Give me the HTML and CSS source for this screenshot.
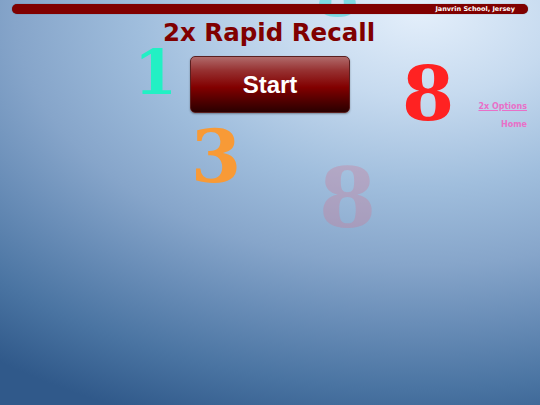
FILE: index.html
```html
<!DOCTYPE html>
<html>
<head>
<meta charset="utf-8">
<link rel="stylesheet" href="styles.css">
</head>
<body>
<div class="stage">
  <div class="num n-top">8</div>
  <div class="num n-one">1</div>
  <div class="num n-three">3</div>
  <div class="num n-red">8</div>
  <div class="num n-faded">8</div>
  <header class="topbar"><span class="school">Janvrin School, Jersey</span></header>
  <h1 class="title">2x Rapid Recall</h1>
  <div class="row">
    <div class="side-left"></div>
    <button class="start">Start</button>
    <nav class="links">
      <a class="link under" href="#">2x Options</a>
      <a class="link" href="#">Home</a>
    </nav>
  </div>
</div>
</body>
</html>
```
FILE: styles.css
```css
html, body {
  margin: 0;
  padding: 0;
  width: 540px;
  height: 405px;
  overflow: hidden;
}
.stage {
  position: relative;
  width: 540px;
  height: 405px;
  padding-top: 4px;
  box-sizing: border-box;
  background: radial-gradient(ellipse 700px 440px at 420px 10px, #e4effb 0%, #c6daef 20%, #a0bedd 40%, #86a5ca 58%, #6a8eb8 71%, #4a74a2 86%, #30598a 100%);
  font-family: "DejaVu Sans", Verdana, sans-serif;
}
.topbar {
  position: relative;
  z-index: 2;
  margin: 0 12px;
  height: 10px;
  background: #800000;
  border-radius: 6px;
  display: flex;
  align-items: center;
  justify-content: flex-end;
  padding: 0 13px;
  box-shadow: 0 0 1px rgba(0,0,0,0.5);
}
.school {
  color: #fff;
  font-size: 6.5px;
  font-weight: bold;
  line-height: 10px;
}
.title {
  position: relative;
  z-index: 2;
  margin: 5px 0 0 0;
  text-align: center;
  color: #800000;
  font-size: 24.5px;
  font-weight: bold;
  line-height: 28px;
  padding-right: 2px;
}
.row {
  position: relative;
  z-index: 2;
  display: grid;
  grid-template-columns: 1fr 160px 1fr;
  margin-top: 9px;
}
.start {
  height: 57px;
  width: 160px;
  border: 1px solid #5a2020;
  border-radius: 5px;
  background: linear-gradient(180deg, #b06a6a 0%, #963030 25%, #820000 55%, #500000 80%, #2a0000 100%);
  color: #fff;
  font-family: "Liberation Sans", Arial, sans-serif;
  font-weight: bold;
  font-size: 24px;
  box-shadow: 0 1px 2px rgba(0,0,0,0.35);
  padding: 0;
}
.links {
  display: flex;
  flex-direction: column;
  align-items: flex-end;
  padding-top: 46px;
  padding-right: 13px;
  gap: 9px;
}
.link {
  color: #e870c8;
  font-size: 8px;
  font-weight: bold;
  line-height: 9px;
  text-decoration: none;
}
.link.under {
  text-decoration: underline;
}
.num {
  position: absolute;
  z-index: 1;
  font-family: "DejaVu Serif", "Liberation Serif", serif;
  font-weight: bold;
  line-height: 1;
}
.n-top {
  left: 316px;
  top: -36px;
  font-size: 62px;
  color: rgba(90, 215, 220, 0.7);
}
.n-one {
  left: 134px;
  top: 42px;
  font-size: 62px;
  color: #22f0c4;
}
.n-three {
  left: 191px;
  top: 121px;
  font-size: 72px;
  color: #f89a36;
}
.n-red {
  left: 402px;
  top: 57px;
  font-size: 75px;
  color: #ff2222;
}
.n-faded {
  left: 319px;
  top: 157px;
  font-size: 82px;
  color: rgba(205, 120, 150, 0.35);
}
```
